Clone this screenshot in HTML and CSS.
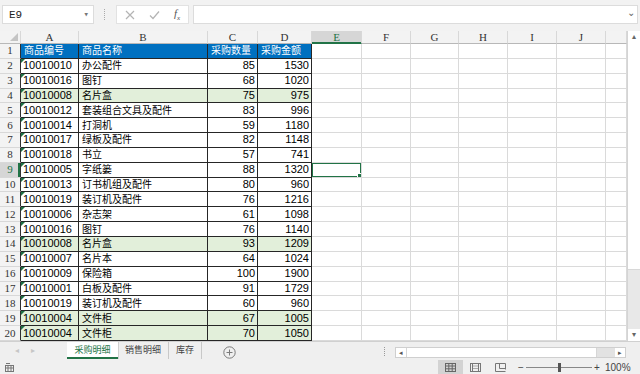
FILE: index.html
```html
<!DOCTYPE html>
<html lang="zh-CN">
<head>
  <meta charset="UTF-8">
  <title>采购明细</title>
  <link rel="stylesheet" href="styles.css">
</head>
<body>

<div class="app">
  <div class="toolbar">
    <div class="namebox"><span>E9</span><span class="caret">▾</span></div>
    <div class="grip"></div>
    <div class="fbtns">
      <svg width="10" height="10" viewBox="0 0 10 10"><path d="M1 1L9 9M9 1L1 9" stroke="#b4b4b4" stroke-width="1.2" fill="none"/></svg>
      <svg width="11" height="10" viewBox="0 0 11 10"><path d="M1 5.5L4 8.5L10 1.5" stroke="#b4b4b4" stroke-width="1.2" fill="none"/></svg>
      <span class="fx">f<sub>x</sub></span>
    </div>
    <div class="formula"><span class="chev">⌄</span></div>
  </div>

  <div class="sheetwrap">
    <table class="grid">
      <colgroup>
        <col style="width:21px"><col style="width:58px"><col style="width:129px"><col style="width:50px">
        <col style="width:54px"><col style="width:50px"><col style="width:49px"><col style="width:48px">
        <col style="width:49px"><col style="width:49px"><col style="width:49px"><col style="width:21px">
      </colgroup>
      <tr class="colhead">
        <th class="corner"></th><th>A</th><th>B</th><th>C</th><th>D</th><th class="on">E</th><th>F</th><th>G</th><th>H</th><th>I</th><th>J</th><th></th>
      </tr>
      <tr class="head">
        <th class="rh">1</th><td class="d t">商品编号</td><td class="d t">商品名称</td><td class="d t">采购数量</td><td class="d t">采购金额</td><td></td><td></td><td></td><td></td><td></td><td></td><td></td>
      </tr>
      <tr><th class="rh">2</th><td class="d code">10010010</td><td class="d t">办公配件</td><td class="d n">85</td><td class="d n">1530</td><td></td><td></td><td></td><td></td><td></td><td></td><td></td></tr>
      <tr><th class="rh">3</th><td class="d code">10010016</td><td class="d t">图钉</td><td class="d n">68</td><td class="d n">1020</td><td></td><td></td><td></td><td></td><td></td><td></td><td></td></tr>
      <tr class="mark"><th class="rh">4</th><td class="d code">10010008</td><td class="d t">名片盒</td><td class="d n">75</td><td class="d n">975</td><td></td><td></td><td></td><td></td><td></td><td></td><td></td></tr>
      <tr><th class="rh">5</th><td class="d code">10010012</td><td class="d t">套装组合文具及配件</td><td class="d n">83</td><td class="d n">996</td><td></td><td></td><td></td><td></td><td></td><td></td><td></td></tr>
      <tr><th class="rh">6</th><td class="d code">10010014</td><td class="d t">打洞机</td><td class="d n">59</td><td class="d n">1180</td><td></td><td></td><td></td><td></td><td></td><td></td><td></td></tr>
      <tr><th class="rh">7</th><td class="d code">10010017</td><td class="d t">绿板及配件</td><td class="d n">82</td><td class="d n">1148</td><td></td><td></td><td></td><td></td><td></td><td></td><td></td></tr>
      <tr><th class="rh">8</th><td class="d code">10010018</td><td class="d t">书立</td><td class="d n">57</td><td class="d n">741</td><td></td><td></td><td></td><td></td><td></td><td></td><td></td></tr>
      <tr><th class="rh on">9</th><td class="d code">10010005</td><td class="d t">字纸篓</td><td class="d n">88</td><td class="d n">1320</td><td class="sel"></td><td></td><td></td><td></td><td></td><td></td><td></td></tr>
      <tr><th class="rh">10</th><td class="d code">10010013</td><td class="d t">订书机组及配件</td><td class="d n">80</td><td class="d n">960</td><td></td><td></td><td></td><td></td><td></td><td></td><td></td></tr>
      <tr><th class="rh">11</th><td class="d code">10010019</td><td class="d t">装订机及配件</td><td class="d n">76</td><td class="d n">1216</td><td></td><td></td><td></td><td></td><td></td><td></td><td></td></tr>
      <tr><th class="rh">12</th><td class="d code">10010006</td><td class="d t">杂志架</td><td class="d n">61</td><td class="d n">1098</td><td></td><td></td><td></td><td></td><td></td><td></td><td></td></tr>
      <tr><th class="rh">13</th><td class="d code">10010016</td><td class="d t">图钉</td><td class="d n">76</td><td class="d n">1140</td><td></td><td></td><td></td><td></td><td></td><td></td><td></td></tr>
      <tr class="mark"><th class="rh">14</th><td class="d code">10010008</td><td class="d t">名片盒</td><td class="d n">93</td><td class="d n">1209</td><td></td><td></td><td></td><td></td><td></td><td></td><td></td></tr>
      <tr><th class="rh">15</th><td class="d code">10010007</td><td class="d t">名片本</td><td class="d n">64</td><td class="d n">1024</td><td></td><td></td><td></td><td></td><td></td><td></td><td></td></tr>
      <tr><th class="rh">16</th><td class="d code">10010009</td><td class="d t">保险箱</td><td class="d n">100</td><td class="d n">1900</td><td></td><td></td><td></td><td></td><td></td><td></td><td></td></tr>
      <tr><th class="rh">17</th><td class="d code">10010001</td><td class="d t">白板及配件</td><td class="d n">91</td><td class="d n">1729</td><td></td><td></td><td></td><td></td><td></td><td></td><td></td></tr>
      <tr><th class="rh">18</th><td class="d code">10010019</td><td class="d t">装订机及配件</td><td class="d n">60</td><td class="d n">960</td><td></td><td></td><td></td><td></td><td></td><td></td><td></td></tr>
      <tr class="mark"><th class="rh">19</th><td class="d code">10010004</td><td class="d t">文件柜</td><td class="d n">67</td><td class="d n">1005</td><td></td><td></td><td></td><td></td><td></td><td></td><td></td></tr>
      <tr class="mark"><th class="rh">20</th><td class="d code">10010004</td><td class="d t">文件柜</td><td class="d n">70</td><td class="d n">1050</td><td></td><td></td><td></td><td></td><td></td><td></td><td></td></tr>
    </table>
    <div class="vscroll">
      <div class="vbtn">▴</div>
      <div class="vthumb"></div>
      <div class="vtrack"></div>
      <div class="vbtn">▾</div>
    </div>
  </div>

  <div class="tabbar">
    <div class="nav"><span>◂</span><span>▸</span></div>
    <div class="tab active">采购明细</div>
    <div class="tab">销售明细</div>
    <div class="tab">库存</div>
    <div class="add">
      <svg width="13" height="13" viewBox="0 0 13 13"><circle cx="6.5" cy="6.5" r="5.7" stroke="#7a7a7a" fill="none"/><path d="M6.5 3.5V9.5M3.5 6.5H9.5" stroke="#7a7a7a"/></svg>
    </div>
    <div class="hgrip"></div>
    <div class="hscroll">
      <div class="hbtn">◂</div>
      <div class="hthumb"></div>
      <div class="htrack"></div>
      <div class="hbtn">▸</div>
    </div>
  </div>

  <div class="status">
    <svg class="macro" width="9" height="9" viewBox="0 0 9 9"><rect x="0.5" y="2.5" width="8" height="6" fill="none" stroke="#777"/><path d="M0.5 5H8.5M3 2.5V8.5M6 2.5V8.5M1 0.5H5" stroke="#777"/></svg>
    <div class="views">
      <div class="view on">
        <svg width="11" height="9" viewBox="0 0 11 9"><rect x="0.5" y="0.5" width="10" height="8" fill="none" stroke="#666"/><path d="M0.5 3H10.5M0.5 5.8H10.5M3.8 0.5V8.5M7.2 0.5V8.5" stroke="#666"/></svg>
      </div>
      <div class="view">
        <svg width="11" height="9" viewBox="0 0 11 9"><rect x="0.5" y="0.5" width="10" height="8" fill="none" stroke="#777"/><rect x="2.5" y="0.5" width="6" height="8" fill="none" stroke="#777"/><path d="M3 3H8M3 5.5H8" stroke="#aaa"/></svg>
      </div>
      <div class="view">
        <svg width="11" height="9" viewBox="0 0 11 9"><path d="M0.5 8.5V0.5H10.5V6.5M4.5 0.5V5.5H10.5M0.5 8.5H10.5" fill="none" stroke="#777"/></svg>
      </div>
    </div>
    <div class="zoom">
      <span class="zsign">−</span>
      <div class="slider"><div class="knob"></div></div>
      <span class="zsign">+</span>
      <span class="pct">100%</span>
    </div>
  </div>
</div>

</body>
</html>
```

FILE: styles.css
```css
body {
  margin: 0;
  background: #f0f0f0;
  font-family: "Liberation Sans", "Noto Sans CJK SC", sans-serif;
}
.app {
  width: 640px;
  height: 374px;
  overflow: hidden;
}

/* formula bar */
.toolbar {
  height: 31px;
  display: flex;
  align-items: flex-start;
  padding-top: 5px;
  box-sizing: border-box;
  background: #f2f2f2;
}
.namebox {
  margin-left: 2px;
  width: 92px;
  height: 19px;
  background: white;
  border: 1px solid #dcdcdc;
  box-sizing: border-box;
  display: flex;
  align-items: center;
  justify-content: space-between;
  padding: 0 4px 0 6px;
  font-family: "Liberation Mono", monospace;
  font-size: 11px;
  color: #222;
}
.caret {
  font-size: 9px;
  color: #777;
}
.grip {
  width: 1px;
  height: 11px;
  margin: 4px 10px 0 10px;
  border-left: 1px dotted #aaa;
}
.fbtns {
  width: 73px;
  height: 19px;
  background: white;
  border: 1px solid #e2e2e2;
  box-sizing: border-box;
  display: flex;
  align-items: center;
  gap: 14px;
  padding-left: 8px;
}
.fx {
  font-family: "Liberation Serif", serif;
  font-style: italic;
  font-size: 11px;
  color: #555;
}
.fx sub {
  font-size: 7px;
}
.formula {
  margin-left: 4px;
  width: 445px;
  height: 19px;
  background: white;
  border: 1px solid #dcdcdc;
  box-sizing: border-box;
  display: flex;
  justify-content: flex-end;
  align-items: center;
  padding-right: 2px;
}
.chev {
  font-size: 10px;
  color: #666;
  line-height: 8px;
  margin-top: -4px;
}

/* sheet */
.sheetwrap {
  display: flex;
  height: 310px;
  background: white;
}
.grid {
  width: 627px;
  table-layout: fixed;
  border-collapse: separate;
  border-spacing: 0;
  background: white;
}
.grid td, .grid th {
  padding: 0;
  border-right: 1px solid #dadada;
  border-bottom: 1px solid #dadada;
  height: 13.85px;
  line-height: 13px;
  font-size: 11px;
  font-weight: normal;
  white-space: nowrap;
  overflow: hidden;
  position: relative;
}
.colhead th {
  height: 12px;
  line-height: 12px;
  background: #f3f3f3;
  border-right-color: #d8d8d8;
  border-bottom-color: #b8b8b8;
  font-family: "Liberation Serif", serif;
  color: #333;
}
.colhead th.on {
  background: #d6d6d6;
  color: #217346;
  border-bottom: 1px solid #217346;
  box-shadow: inset 0 -1px 0 #217346;
}
.corner::after {
  content: "";
  position: absolute;
  right: 2px;
  bottom: 2px;
  border-left: 8px solid transparent;
  border-bottom: 8px solid #c4c4c4;
}
.grid th.rh {
  background: #f3f3f3;
  border-right-color: #303030;
  border-bottom-color: #d8d8d8;
  font-family: "Liberation Serif", serif;
  color: #333;
  text-align: center;
}
.grid th.rh.on {
  background: #d6d6d6;
  color: #217346;
  box-shadow: inset -2px 0 0 #217346;
}
.grid td.d {
  border-right-color: #262626;
  border-bottom-color: #262626;
  color: #000;
}
.t {
  padding-left: 3px !important;
  font-size: 10px !important;
}
.code {
  padding-left: 2px !important;
}
.code::before {
  content: "";
  position: absolute;
  left: 0;
  top: 0;
  border-top: 4px solid #1e7145;
  border-right: 4px solid transparent;
}
.n {
  text-align: right;
  padding-right: 2px !important;
}
.head td.d {
  background: #0070c0;
  color: white;
}
.mark td.d {
  background: #e2efda;
}
.sel::after {
  content: "";
  position: absolute;
  left: -1px;
  top: -1px;
  right: -1px;
  bottom: -1px;
  border: 2px solid #217346;
}
.sel::before {
  content: "";
  position: absolute;
  right: -2px;
  bottom: -2px;
  width: 4px;
  height: 4px;
  background: #217346;
  border: 1px solid white;
  z-index: 2;
}

.vscroll {
  width: 13px;
  display: flex;
  flex-direction: column;
  border-left: 1px solid #d4d4d4;
  background: #e8e8e8;
}
.vbtn {
  height: 12px;
  font-size: 8px;
  line-height: 12px;
  text-align: center;
  color: #666;
  background: white;
}
.vthumb {
  height: 226px;
  background: white;
  border-bottom: 1px solid #d8d8d8;
}
.vtrack {
  flex: 1;
}

/* sheet tabs */
.tabbar {
  height: 19px;
  display: flex;
  align-items: flex-start;
  background: #efefef;
  border-top: 1px solid #d0d0d0;
  box-sizing: border-box;
}
.nav {
  width: 67px;
  display: flex;
  gap: 12px;
  padding-left: 15px;
  box-sizing: border-box;
  font-size: 8px;
  line-height: 17px;
  color: #c6c6c6;
}
.tab {
  height: 17px;
  line-height: 17px;
  font-size: 9px;
  color: #444;
  padding: 0 7px;
  border-right: 1px solid #c8c8c8;
}
.tab.active {
  width: 51px;
  box-sizing: border-box;
  text-align: center;
  padding: 0;
  background: white;
  color: #217346;
  border-right: none;
  border-bottom: 2px solid #217346;
  box-shadow: 1px 0 0 #d0d0d0;
}
.add {
  margin-left: 21px;
  padding-top: 3px;
}
.hgrip {
  margin-left: 148px;
  margin-top: 5px;
  height: 9px;
  border-left: 1px dotted #999;
}
.hscroll {
  margin-left: 10px;
  margin-top: 5px;
  width: 231px;
  height: 11px;
  display: flex;
  border: 1px solid #cfcfcf;
  box-sizing: border-box;
  background: #e2e2e2;
}
.hbtn {
  width: 10px;
  background: white;
  font-size: 7px;
  line-height: 9px;
  text-align: center;
  color: #555;
}
.hthumb {
  width: 189px;
  background: white;
  border-left: 1px solid #d6d6d6;
  border-right: 1px solid #d6d6d6;
}
.htrack {
  flex: 1;
}

/* status bar */
.status {
  height: 14px;
  display: flex;
  align-items: center;
  background: #f0f0f0;
}
.macro {
  margin-left: 5px;
}
.views {
  margin-left: 424px;
  display: flex;
  height: 14px;
}
.view {
  width: 25px;
  display: flex;
  align-items: center;
  justify-content: center;
}
.view.on {
  background: #d3d3d3;
}
.zoom {
  display: flex;
  align-items: center;
  margin-left: 5px;
  font-size: 10px;
  color: #444;
}
.zsign {
  width: 6px;
  text-align: center;
}
.slider {
  width: 66px;
  height: 1px;
  margin: 0 2px;
  background: #888;
  position: relative;
}
.knob {
  position: absolute;
  left: 32px;
  top: -4px;
  width: 3px;
  height: 9px;
  background: #555;
}
.pct {
  margin-left: 5px;
}
```
